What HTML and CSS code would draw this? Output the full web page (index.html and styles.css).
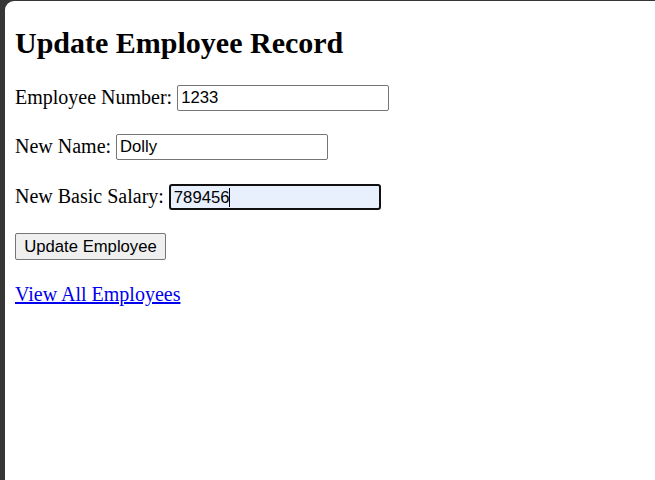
FILE: index.html
```html
<!DOCTYPE html>
<html>
<head>
<meta charset="utf-8">
<link rel="stylesheet" href="styles.css">
</head>
<body>
<div class="page">
  <h2 class="title">Update Employee Record</h2>
  <form class="form">
    <div class="row"><span class="label">Employee Number:</span><input class="field" type="text" value="1233"></div>
    <div class="row"><span class="label">New Name:</span><input class="field" type="text" value="Dolly"></div>
    <div class="row row-salary"><span class="label">New Basic Salary:</span><span class="field focused">789456<span class="caret"></span></span></div>
    <div class="row row-btn"><button class="btn" type="button">Update Employee</button></div>
    <div class="row row-link"><a class="link" href="#">View All Employees</a></div>
  </form>
</div>
</body>
</html>
```
FILE: styles.css
```css
html, body { margin: 0; padding: 0; }
body {
  background: #363636;
  font-family: "Liberation Serif", "Times New Roman", serif;
  font-size: 20px;
  color: #000;
}
.page {
  margin: 1px 0 0 5px;
  min-height: 479px;
  box-sizing: border-box;
  background: #fff;
  border-top-left-radius: 9px;
  padding: 0 10px;
  display: flow-root;
}
.title {
  font-size: 30px;
  font-weight: bold;
  margin: 25px 0 25px 0;
  line-height: 34px;
}
.form {
  display: flex;
  flex-direction: column;
  gap: 23px;
}
.row {
  height: 26px;
  display: flex;
  align-items: center;
  gap: 5px;
  line-height: 23px;
}
.label { padding-bottom: 2px; }
.row-salary { margin-top: 1px; }
.row-btn { height: 27px; }
.row-link { height: 23px; }
.field {
  box-sizing: border-box;
  width: 212px;
  height: 26px;
  border: 1px solid #767676;
  border-radius: 2px;
  padding: 1px 3px;
  font-family: "Liberation Sans", Arial, sans-serif;
  font-size: 16.67px;
  color: #000;
  background: #fff;
  outline: none;
  margin: 0;
}
.focused {
  display: flex;
  align-items: center;
  border: 2px solid #101010;
  border-radius: 3px;
  background: #e8f0fe;
  padding: 0 3px;
}
.caret {
  display: inline-block;
  width: 1px;
  height: 19px;
  background: #000;
}
.btn {
  box-sizing: border-box;
  height: 27px;
  width: 151px;
  padding: 0;
  border: 1px solid #767676;
  border-radius: 2px;
  background: #efefef;
  font-family: "Liberation Sans", Arial, sans-serif;
  font-size: 16.67px;
  color: #000;
}
.link {
  color: #0000ee;
  text-decoration: underline;
}
```
